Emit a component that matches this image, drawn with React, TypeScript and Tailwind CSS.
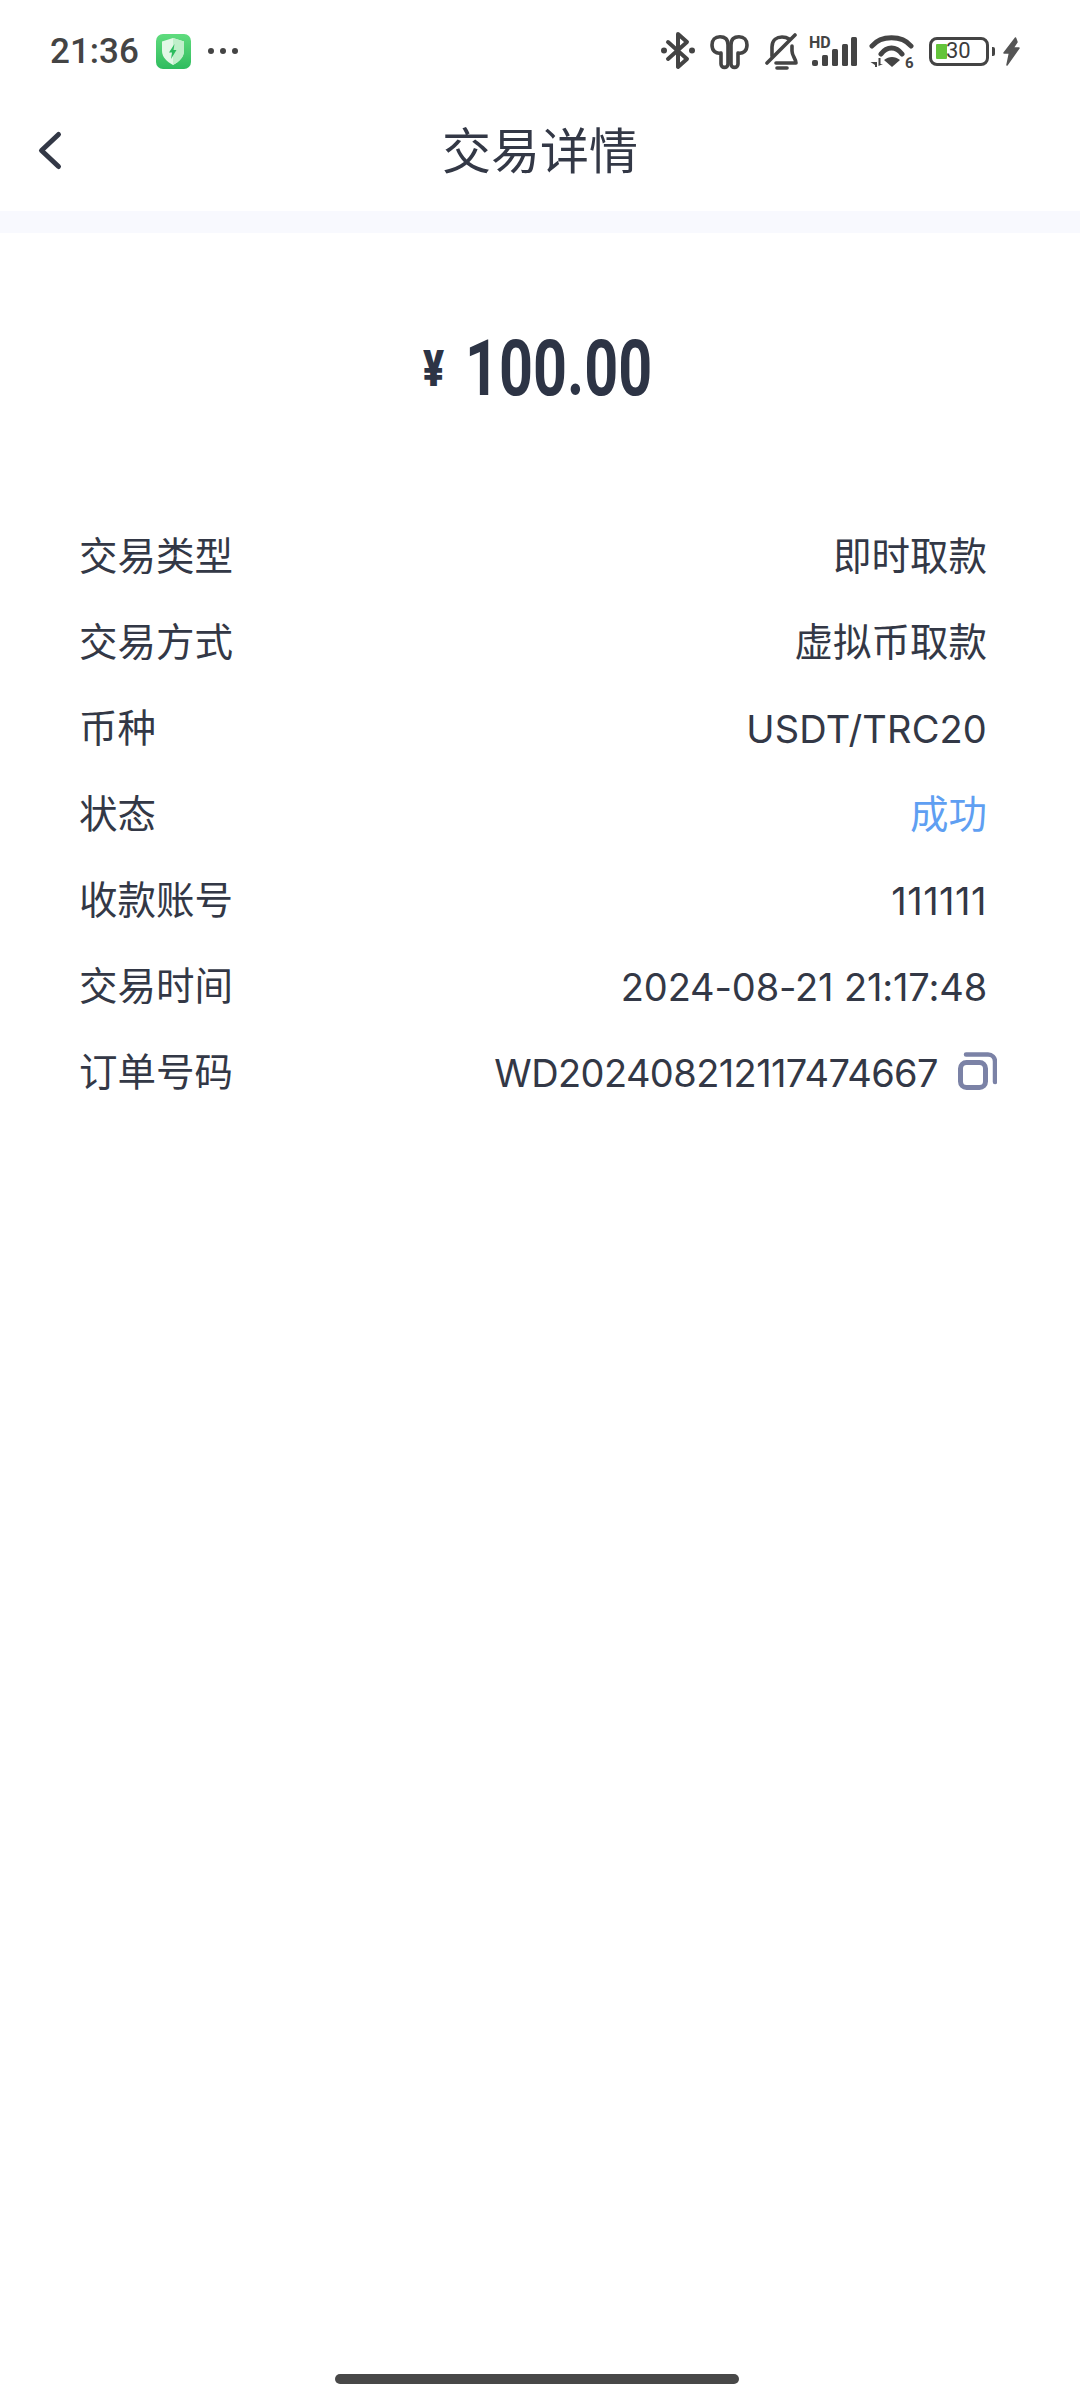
const rows = [
  { label: '交易类型', value: '即时取款', tone: 'text-[38.5px]' },
  { label: '交易方式', value: '虚拟币取款', tone: 'text-[38.5px]' },
  { label: '币种', value: 'USDT/TRC20', tone: 'text-[38px] tracking-[0.15px]' },
  { label: '状态', value: '成功', tone: 'text-[38.5px] text-[#5f9ff2]' },
  { label: '收款账号', value: '111111', tone: 'text-[38px] tracking-[0.5px]' },
  { label: '交易时间', value: '2024-08-21 21:17:48', tone: 'text-[38px] tracking-[-0.15px]' },
];

function StatusIcons() {
  return (
    <div className="flex items-center text-[#444444]">
      {/* bluetooth */}
      <svg width="34" height="38" viewBox="0 0 34 38" fill="none" stroke="currentColor" strokeWidth="4" strokeLinecap="round" strokeLinejoin="round">
        <path d="M7 10 L26 27 L17 35 V2 L26 10 L7 27" />
        <circle cx="3" cy="18.5" r="3" fill="currentColor" stroke="none" />
        <circle cx="31" cy="18.5" r="3" fill="currentColor" stroke="none" />
      </svg>
      {/* earbuds */}
      <svg className="ml-[15px]" width="39" height="38" viewBox="0 0 39 38" fill="none" stroke="currentColor" strokeWidth="3.6" strokeLinecap="round" strokeLinejoin="round">
        <path d="M11 21 V32 C11 36.500 18 36.500 18 32 V13 C18 7 15 4.800 10 4.800 C5 4.800 2 8 2 13 C2 19 6 22 11 21 Z" />
        <path d="M28 21 V32 C28 36.500 21 36.500 21 32 V13 C21 7 24 4.800 29 4.800 C34 4.800 37 8 37 13 C37 19 33 22 28 21 Z" />
      </svg>
      {/* muted bell */}
      <svg className="ml-[16px]" width="33" height="38" viewBox="0 0 33 38" fill="none" stroke="currentColor" strokeWidth="3.6" strokeLinecap="round" strokeLinejoin="round">
        <path d="M7 24 V15 C7 8 12 5 17 5 C20 5 22 5.500 24 7" />
        <path d="M27 14 V19 C27 24 31 27 31 31 H11" />
        <path d="M2 31 L30 3" />
        <path d="M12 36 H22" />
      </svg>
      {/* hd signal */}
      <svg className="ml-[11px]" width="48" height="38" viewBox="0 0 48 38" fill="currentColor">
        <text x="0" y="15.500" fontSize="16" fontWeight="700" fontFamily="Roboto, sans-serif">HD</text>
        <rect x="3" y="28" width="6" height="6" rx="2" />
        <rect x="13" y="23" width="6" height="11" rx="1.500" />
        <rect x="23" y="17" width="6" height="17" rx="1.500" />
        <rect x="33" y="12" width="6" height="22" rx="1.500" />
        <rect x="42" y="5" width="6" height="29" rx="1.500" />
      </svg>
      {/* wifi */}
      <svg className="ml-[12px]" width="45" height="38" viewBox="0 0 45 38" fill="none" stroke="currentColor" strokeWidth="5" strokeLinecap="round">
        <path d="M3 14 C12 3 33 3 42 14" />
        <path d="M12 22 C18 14 27 14 33 22" />
        <path d="M15 28 C20 24 26 24 31 28 L23 35 Z" fill="currentColor" stroke="none" />
        <path d="M1.500 30 H8 V35 H6 V33 Z" fill="currentColor" stroke="none" />
        <path d="M9.500 26 H11.500 V32 H14 L9.500 34 Z" fill="currentColor" stroke="none" />
        <text x="36" y="36" fontSize="15" fontWeight="700" fill="currentColor" stroke="none" fontFamily="Roboto, sans-serif">6</text>
      </svg>
      {/* battery */}
      <div className="ml-[15px] flex items-center">
        <div className="relative flex h-[29px] w-[60px] rounded-[8px] border-[3px] border-[#444444] p-[4px]">
          <div className="w-[11px] rounded-[1px] bg-[#63c43a]" />
          <span className="absolute left-[14px] top-0 flex h-full items-center text-[22px] leading-none text-[#3c3c3c] font-['Roboto',sans-serif]">30</span>
        </div>
        <div className="ml-[3px] h-[9px] w-[3px] rounded-r-[2px] bg-[#444444]" />
      </div>
      {/* charging */}
      <svg className="ml-[8px]" width="17" height="29" viewBox="0 0 17 29" fill="#555555" stroke="#555555" strokeWidth="1.500" strokeLinejoin="round">
        <path d="M12.500 1 L1 16 H6.500 L4 28 L16 11 H10 L14 5 Z" />
      </svg>
    </div>
  );
}

function AppBadge() {
  return (
    <div className="ml-[17px] flex h-[35px] w-[35px] items-center justify-center rounded-[7px] bg-gradient-to-b from-[#5fdc7e] to-[#2dbc5e]">
      <svg width="24" height="27" viewBox="0 0 24 27">
        <path d="M12 0 L23 3.500 V13 C23 19.500 17.500 24 12 27 C6.500 24 1 19.500 1 13 V3.500 Z" fill="#e2f8e6" />
        <path d="M12 0 L23 3.500 V13 C23 19.500 17.500 24 12 27 Z" fill="#c0efca" />
        <path d="M13.500 6 L8 14.500 H11 L10 21 L15.500 12 H12.500 Z" fill="#2dbc5e" />
      </svg>
    </div>
  );
}

export default function App() {
  return (
    <div className="flex h-[2400px] w-[1080px] flex-col bg-white font-['Inter','Noto_Sans_CJK_SC',sans-serif] text-[38px] text-[#333846]">
      <div className="flex h-[100px] items-center justify-between pl-[50px] pr-[60px] pt-[2px]">
        <div className="flex items-center">
          <span className="text-[35px] font-medium leading-none text-[#444444] font-['Roboto',sans-serif]">21:36</span>
          <AppBadge />
          <div className="ml-[17px] flex gap-[6px]">
            <div className="h-[6px] w-[6px] rounded-full bg-[#444444]" />
            <div className="h-[6px] w-[6px] rounded-full bg-[#444444]" />
            <div className="h-[6px] w-[6px] rounded-full bg-[#444444]" />
          </div>
        </div>
        <StatusIcons />
      </div>

      <div className="relative flex h-[111px] items-center justify-center pb-[9px]">
        <svg className="absolute left-[36px] top-[29px]" width="28" height="44" viewBox="0 0 28 44" fill="none" stroke="#333846" strokeWidth="5" strokeLinecap="round" strokeLinejoin="round">
          <path d="M22.500 5.500 L5.500 21.500 L22.500 37.500" />
        </svg>
        <h1 className="text-[49px] font-normal leading-none text-[#333846]">交易详情</h1>
      </div>
      <div className="h-[22px] bg-[#f8f9fe]" />

      <div className="mt-[101px] flex h-[70px] items-center justify-center pr-[6px] font-['Roboto',sans-serif] font-bold text-[#2d3445]">
        <span className="mr-[20px] inline-block w-[22px] origin-left scale-x-[0.78] text-[50px] font-black leading-none">¥</span>
        <span className="inline-block w-[186px] origin-left scale-x-[0.76] whitespace-nowrap text-[78px] leading-none">100.00</span>
      </div>

      <div className="mt-[110px] flex flex-col pl-[79px] pr-[93px]">
        {rows.map((row) => (
          <div key={row.label} className="flex h-[86px] items-center justify-between">
            <span className="text-[38.5px]">{row.label}</span>
            <span className={row.tone}>{row.value}</span>
          </div>
        ))}
        <div className="flex h-[86px] items-center justify-between">
          <span className="text-[38.5px]">订单号码</span>
          <div className="flex items-center">
            <span className="tracking-[-0.6px]">WD202408212117474667</span>
            <svg className="-mr-[10px] -mt-[5px] ml-[20px]" width="39" height="38" viewBox="0 0 39 38" fill="none" stroke="#7b82a6" strokeLinecap="round">
              <rect x="2.500" y="10.500" width="25" height="25" rx="6" strokeWidth="5" />
              <path d="M8 2.500 H30 C34 2.500 37 5.500 37 9.500 V30" strokeWidth="4.500" />
            </svg>
          </div>
        </div>
      </div>

      <div className="mb-[16px] mt-auto flex justify-center pr-[6px]">
        <div className="h-[10px] w-[404px] rounded-full bg-[#484848]" />
      </div>
    </div>
  );
}
